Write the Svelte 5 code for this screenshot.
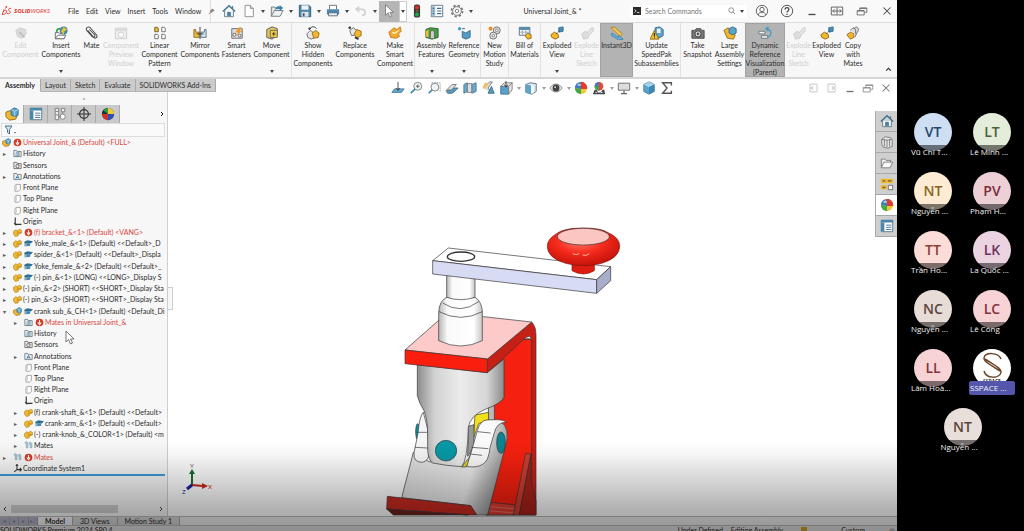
<script>
  const icons = {
    home: `<path d="M3 8v6.5h10V8" fill="#f4f6f8" stroke="#66727c"/><path d="M1 8.5 8 2l7 6.5" fill="none" stroke="#3b7390" stroke-width="1.7"/><path d="M6.500 14V9.500h3V14" fill="#4b8fb5" stroke="#3b6c86"/><path d="M12 2.500v3" stroke="#66727c" stroke-width="1.500"/>`,
    file: `<path d="M3.500 1.500h6l3.500 3.500v9.500H3.500z" fill="#fdfdfd" stroke="#888"/><path d="M9.500 1.500V5H13" fill="#ddd" stroke="#888"/>`,
    open: `<path d="M1.500 14V3.500h4L7 5h5v3" fill="#dfe3e6" stroke="#68727a"/><path d="M1.500 14 5 7.500h10L11.500 14z" fill="#eef1f3" stroke="#68727a"/><path d="M6 7c0-4 3-5 5-4V1l4 3.500L11 8V5.500C9 5 7.500 5.500 6 7z" fill="#3f7fa5"/>`,
    save: `<path d="M1.500 1.500h11l2 2v11h-13z" fill="#4d88ad" stroke="#31546c"/><path d="M4 1.500h8v5H4z" fill="#f0f3f5"/><path d="M4 9h8v5.500H4z" fill="#dde3e8"/><path d="M5.500 10.500h2V14h-2z" fill="#456"/>`,
    print: `<path d="M4 6V1.500h8V6" fill="#fff" stroke="#667"/><path d="M1 6h14v6H1z" fill="#4d88ad"/><path d="M3 10h10v3.500H3z" fill="#e9eef1" stroke="#526774"/>`,
    undo: `<path d="M2 6h7c5 0 5 7 0 7" fill="none" stroke="#d2d2d2" stroke-width="2"/><path d="M6 2 1 6l5 4z" fill="#d2d2d2"/>`,
    pointer: `<path d="M4 1v12l3-3 2 5 2-1-2-4.500h4z" fill="#fff" stroke="#666" stroke-width=".8"/>`,
    traffic: `<rect x="4.500" y="0.500" width="7" height="15" rx="2.500" fill="#3b3b3b"/><circle cx="8" cy="4" r="2.300" fill="#e33023"/><circle cx="8" cy="8" r="1.500" fill="#665f30"/><circle cx="8" cy="12" r="2.300" fill="#23a746"/>`,
    list: `<path d="M1.500 1.500h13v13h-13z" fill="#fff" stroke="#5b6c78"/><path d="M2 2h4v12H2z" fill="#a9c4d5"/><path d="M3 5h2M3 8h2M3 11h2M8 5h5M8 8h5M8 11h5" stroke="#3f6f90" stroke-width="1.300"/>`,
    feature: `<path d="M1.500 1.500h13v13h-13z" fill="#fff" stroke="#4a7591"/><path d="M1 1h14v3H1z" fill="#4a86ab"/><path d="M1 4h4v10H1z" fill="#4a86ab"/><path d="M7 7h6M7 9.500h6M7 12h6" stroke="#3f6f90"/>`,
    gear: `<circle cx="8" cy="8" r="6.300" fill="none" stroke="#777" stroke-width="2" stroke-dasharray="2.600 2.340"/><circle cx="8" cy="8" r="5" fill="#f6f6f6" stroke="#777"/><circle cx="8" cy="8" r="2" fill="#fff" stroke="#777"/>`,
    user: `<circle cx="8" cy="8" r="6.500" fill="none" stroke="#555"/><circle cx="8" cy="6.300" r="2.500" fill="none" stroke="#555"/><path d="M3.500 12.500c1-4 8-4 9 0" fill="none" stroke="#555"/>`,
    help: `<circle cx="8" cy="8" r="6.500" fill="none" stroke="#444"/><path d="M5.800 6.300c0-3 4.400-2.800 4.400-.2C10.200 8 8 7.800 8 9.800M8 11v1.500" fill="none" stroke="#444" stroke-width="1.400"/>`,
    min: `<path d="M4 12h8" stroke="#444" stroke-width="1.500"/>`,
    dock: `<path d="M1.500 3.500h13v9h-13zM8 4v8M3 8h10M5 6 3 8l2 2M11 6l2 2-2 2" fill="none" stroke="#555"/>`,
    restore: `<path d="M2.500 7.500h8v5h-8zM5.500 7V4.500h8v5H11M2.500 8h8M5.500 5h8" fill="none" stroke="#666"/>`,
    close: `<path d="m4 4 8 8M12 4l-8 8" stroke="#444" stroke-width="1.200"/>`,
    paneL: `<path d="M3.500 3.500h8v9h-8z" fill="none" stroke="#aaa"/><path d="M7 6 5 8l2 2" fill="none" stroke="#777"/>`,
    paneR: `<path d="M3.500 3.500h8v9h-8z" fill="none" stroke="#aaa"/><path d="m8 6 2 2-2 2" fill="none" stroke="#777"/>`,
    part: `<path d="M1 6 5 3l3 2 3-3 4 2v5l-4 1-2 4-5 1-3-4z" fill="#f2b62f" stroke="#a67c1e"/><path d="m8 5 1 4 5-1M9 9l-3 2" fill="none" stroke="#a87b17"/>`,
    asm: `<path d="m1 6 5-2 4 5 4 1-2 4-7 1-4-4z" fill="#f2b62f" stroke="#8e6a18"/><path d="m7 3 4-2 4 2v6l-4 2-4-2z" fill="#58a6cf" stroke="#2c6381"/><path d="m7 3 4 2 4-2M11 5v6" fill="none" stroke="#b8dff1"/>`,
    edit: `<path d="m2 5 5-3 6 2 1 5-5 5-5-2z" fill="#dcdcdc" stroke="#cdcdcd"/><path d="m6 7 6 6" stroke="#bbb" stroke-width="2"/>`,
    insert: `<path d="M1.500 14.500v-7h4l1 1h5v6z" fill="#f7f7f7" stroke="#666"/><path d="m1.500 14.500 3-4h9l-2 4z" fill="#fff" stroke="#666"/><circle cx="11" cy="5" r="4.500" fill="#3986b8"/><path d="m11 1 4 3-3 2-1 4-3-4z" fill="#f2c12f"/><path d="M3 7c0-4 3-4 4-4" fill="none" stroke="#3aa14a" stroke-width="2"/>`,
    clip: `<path d="m3 5 7 8c2 2 5 0 3-3L6 2C4 0 0 2 2 5l6 7c2 2 4 0 3-2L5 4" fill="none" stroke="#4d4d4d" stroke-width="1.200"/>`,
    preview: `<path d="M1.500 2.500h13v12h-13z" fill="#eee" stroke="#ccc"/><path d="M2 3h12v3H2z" fill="#ddd"/><circle cx="8" cy="10" r="3" fill="#fff" stroke="#ccc"/>`,
    linear: `<path d="M2 1.500h3l1 1v4H2z" fill="#edbe3f" stroke="#6c5a25"/><g fill="#fff" stroke="#666"><path d="M10 1.500h3l1 1v4h-4zM2 9.500h3l1 1v4H2zM10 9.500h3l1 1v4h-4z"/></g>`,
    mirror: `<path d="M1 4h2v3h4v6H1z" fill="#edbe3f" stroke="#8a6c20"/><path d="M15 4h-2v3H9v6h6z" fill="#cfe1ed" stroke="#547284"/><path d="M8 1v14" stroke="#333"/><path d="M4 9h8" stroke="#333"/>`,
    fastener: `<path d="M2 3h12v11H2z" fill="#ddd" stroke="#666"/><circle cx="5" cy="10" r="1.800" fill="#fff" stroke="#555"/><circle cx="11" cy="11" r="1.500" fill="#fff" stroke="#555"/><path d="m11 1-5 6h3L7 11l7-6h-3l2-3z" fill="#f1952b"/>`,
    move: `<path d="m2 4 6-3 6 2v8l-6 4-6-2z" fill="#e4c55b" stroke="#555"/><path d="M6 5h8v8H6z" fill="#efcb44" stroke="#666"/><path d="M8 9h4M10 7v4" stroke="#333"/>`,
    hidden: `<path d="m1 9 4-4 4 3 1 5-4 2-4-2z" fill="#e6e6e6" stroke="#666"/><path d="m7 8 4-3 4 3-1 5-5 1z" fill="#f2b62f" stroke="#8e6a18"/><path d="M4 4c2-4 6-4 8-1" fill="none" stroke="#333"/><circle cx="4" cy="3" r="1.300" fill="#333"/>`,
    replace: `<path d="m2 5 4-3 4 3-1 5-5 1z" fill="#e9e9e9" stroke="#666"/><path d="m7 9 3-5 5 2v5l-5 3z" fill="#f2b62f" stroke="#8e6a18"/><circle cx="2" cy="2" r="1.500" fill="#333"/><path d="m8 13 4 2" stroke="#333" stroke-width="2"/>`,
    smart: `<path d="m1 7 6-5 3 2 4-3 1 5-3 3 1 3-4 2-6-1z" fill="#f2a92f" stroke="#c07818"/><path d="M5 7c2 3 5 0 7-2" fill="none" stroke="#fff3c8" stroke-width="1.500"/>`,
    features: `<path d="M1 4 6 2l9 1v10l-7 2-7-2z" fill="#46a043" stroke="#2f572e"/><path d="m1 6 3-2v9l-3-1z" fill="#efbd35"/><path d="M6 14V8c0-4 5-4 5 0v6" fill="#ccc" stroke="#555"/>`,
    refgeo: `<path d="m6 6 4 2 5-3v8l-5 2-4-2z" fill="#559bc3" stroke="#386d8d"/><circle cx="3" cy="3" r="2" fill="#4aa0cc"/><path d="M6 3h3" stroke="#444"/>`,
    motion: `<circle cx="10" cy="5" r="4" fill="#ddd" stroke="#666"/><circle cx="10" cy="5" r="1.500" fill="#fff" stroke="#777"/><circle cx="6" cy="11" r="4" fill="#e8e8e8" stroke="#666"/><circle cx="6" cy="11" r="1.500" fill="#fff" stroke="#777"/><circle cx="3" cy="3" r="2.300" fill="#ef8a32"/>`,
    bom: `<path d="M1.500 1.500h12v9h-12z" fill="#fff" stroke="#47657c"/><path d="M1.500 1.500h12v3h-12z" fill="#5489ae"/><path d="M5 4v6M9 4v6M2 7h11" stroke="#8ba4b5"/><path d="m8 11 3-3 4 2v4l-4 1z" fill="#f2b62f" stroke="#8e6a18"/>`,
    exploded: `<path d="m1 10 4-3 4 2 1 4-4 2-4-2z" fill="#f2b62f" stroke="#8e6a18"/><path d="m10 2 5-1v5l-5 1z" fill="#438db8" stroke="#316b8d"/><path d="m7 9 4-4" stroke="#444" stroke-dasharray="1.500 1"/>`,
    line: `<path d="m2 9 4-3 5 3-2 5-5 1z" fill="#ddd" stroke="#ccc"/><path d="m8 8 5-6h2v4l-4 4" fill="#e4e4e4" stroke="#ccc"/>`,
    instant: `<path d="m1 2 4-1 9 8-2 3z" fill="#f1c552" stroke="#a7822d"/><path d="m2 8 8 5V11l5 4-5 1-8-5z" fill="#68b3db" stroke="#3e81a6"/>`,
    update: `<path d="m6 2 5-1 4 3v7l-5 3-5-3z" fill="#5aa5cd" stroke="#34647e"/><path d="M8 3h4v5H8z" fill="#f0f0f0"/><path d="m5 5 5 10H0z" fill="#f5c22c" stroke="#8b6a15"/><path d="M5 8v4M5 13v1" stroke="#222" stroke-width="1.300"/>`,
    camera: `<path d="M1 5h3l2-2h5l1 2h3v9H1z" fill="#777" stroke="#444"/><circle cx="8" cy="9" r="3.500" fill="#ddd" stroke="#333"/><circle cx="8" cy="9" r="1.500" fill="#555"/>`,
    large: `<path d="m1 5 5-3 3 4 5 4-2 5-7-1z" fill="#f2b62f" stroke="#8e6a18"/><path d="m7 3 4-2 4 2v5l-4 2-4-2z" fill="#58a6cf" stroke="#2c6381"/>`,
    dynamic: `<path d="M1 6h7v3H1zM4 11h7v3H4z" fill="#f3f3f3" stroke="#65747d"/><path d="M10 3c6 1 6 8 1 10M12 1 9 3l3 3" fill="none" stroke="#4a9cc7" stroke-width="1.500"/>`,
    copy: `<path d="m1 10 4-3 4 2v4l-4 2z" fill="#f2b62f" stroke="#8e6a18"/><path d="m5 5 3-3 3 2v5M9 3c4-4 7 0 4 4l-3 6" fill="#ddd" stroke="#666"/>`,
    normal: `<path d="m1 13 3-4h11l-3 4z" fill="#69abd0" stroke="#447997"/><path d="M8 1v9M6 8l2 3 2-3" stroke="#444" fill="none"/>`,
    zoomFit: `<circle cx="10" cy="6" r="4.500" fill="#eef4f7" stroke="#777"/><path d="m7 9-5 5" stroke="#3d86b2" stroke-width="2"/><path d="M8 6h4M10 4v4" stroke="#555"/>`,
    zoomArea: `<circle cx="9" cy="7" r="4.500" fill="#eef4f7" stroke="#777"/><path d="m6 10-4 4" stroke="#3d86b2" stroke-width="2"/><path d="M5 2h10v10" fill="none" stroke="#999" stroke-dasharray="2 1"/>`,
    prev: `<path d="m1 11 7-7h5L8 10z" fill="#ddd" stroke="#777"/><path d="M2 13c0-3 3-3 5-2l3-3h5l-4 4-3 2H3z" fill="#5799bf" stroke="#4c7187"/>`,
    section: `<path d="m1 4 4-2v10l-4 2zM10 4l5-2v10l-5 2z" fill="#69abd0" stroke="#4b7891"/><path d="M5 3h5v10H5z" fill="#ddd" stroke="#777"/>`,
    dynview: `<path d="m2 8 8-7h3L8 8l5 6" fill="#ddd" stroke="#777"/><path d="m2 7 3-6 3 3-4 5z" fill="#f3bd57"/><path d="M8 14l4-8 3 8z" fill="#5799bf" stroke="#436e87"/>`,
    orient: `<path d="M2 6h9v9H2z" fill="#58a1cb" stroke="#42748e"/><path d="m2 6 4-4h9l-4 4z" fill="#f2f2f2" stroke="#777"/><path d="m11 6 4-4v8l-4 5z" fill="#e4e4e4" stroke="#777"/><path d="M8 0v6M6 4l2 3 2-3" fill="none" stroke="#333"/>`,
    style: `<path d="m2 4 5-2 7 1v9l-5 3-7-2z" fill="#d9e6ed" stroke="#58707e"/><path d="m2 4 6 1v10l-6-2z" fill="#5ba4cc"/><path d="M8 5h3v9H8z" fill="#fff"/>`,
    eye: `<path d="M1 8c4-6 10-6 14 0-4 6-10 6-14 0z" fill="#f3f3f3" stroke="#777"/><circle cx="8" cy="8" r="4" fill="#444"/><circle cx="7" cy="7" r="1" fill="#ddd"/>`,
    ball: `<circle cx="8" cy="8" r="7" fill="#f1c735"/><path d="M8 1a7 7 0 0 0-7 7l7 1z" fill="#3d7fc5"/><path d="M8 1a7 7 0 0 1 7 8L8 9z" fill="#e33b2e"/><path d="M1 8a7 7 0 0 0 7 7V9z" fill="#3aaa4d"/><ellipse cx="6" cy="4.500" rx="2" ry="1.300" fill="#fff" opacity=".6"/>`,
    darkball: `<circle cx="8" cy="8" r="7" fill="#273e9b"/><path d="M8 1a7 7 0 0 1 7 7L8 8z" fill="#f2ca32"/><path d="M15 8a7 7 0 0 1-7 7V8z" fill="#2c50b8"/><path d="M8 1a7 7 0 0 0-7 7l7 1z" fill="#26332e"/><path d="M1 8a7 7 0 0 0 7 7V8z" fill="#c9362a"/><path d="M3 4c2-3 5-3 5-3v7z" fill="#2f9a45"/>`,
    scene: `<circle cx="8" cy="6" r="5" fill="#e6483b"/><path d="M8 1a5 5 0 0 0-5 5l5 1z" fill="#3d7fc5"/><path d="M3 6a5 5 0 0 0 5 5V6z" fill="#3aaa4d"/><path d="M1 15 3 10h2l2 3h3l2-3h2l1 5z" fill="#444"/><path d="M4 13h2M10 13h2" stroke="#fff"/>`,
    monitor: `<path d="M1.500 2.500h13v8h-13z" fill="#ddd" stroke="#666"/><path d="M8 11v3M4.500 14.500h7" stroke="#666" stroke-width="1.500"/>`,
    cube: `<path d="m2 4 6-3 6 3v8l-6 3-6-3z" fill="#57a3ce" stroke="#4580a0"/><path d="m2 4 6-3 6 3-6 3z" fill="#a7d3ea"/><path d="M8 7v8l6-3V4z" fill="#3d86b2"/>`,
    sigma: `<path d="M13 5V2H3l5 6-5 6h10v-3" fill="none" stroke="#555" stroke-width="1.600"/>`,
    library: `<path d="m2 5 4-3 6 1 2 3v7l-5 2-5-1-2-3z" fill="#e4e4e4" stroke="#777"/><path d="M5 5v8M8 6v8M11 5v8M2 5l6 1 6-1" fill="none" stroke="#777"/>`,
    folder: `<path d="M1.500 13.500v-10h4L7 5h5v2" fill="#eee" stroke="#777"/><path d="m1.500 13.500 3-6.500h10l-3 6.500z" fill="#fafafa" stroke="#777"/>`,
    palette: `<path d="M1 2h14v5H1zM1 9h7v5H1z" fill="#edb933"/><path d="M3 4.500h3M9 4.500h4M3 12h3" stroke="#6d5a2a" stroke-width="1.500"/><path d="M9.500 9.500h5v5h-5z" fill="#fff" stroke="#666"/>`,
    tree: `<path d="M2.500 1.500h4v13h-4zM9.500 1.500h4v4h-4z" fill="#eee" stroke="#777"/><circle cx="11" cy="11" r="3" fill="#fff" stroke="#777"/><path d="M3 5h3M3 9h3M7 11h2M11 6v2" stroke="#777"/>`,
    target: `<circle cx="8" cy="8" r="5" fill="none" stroke="#333" stroke-width="1.400"/><path d="M8 0v16M0 8h16" stroke="#333" stroke-width="1.200"/>`,
    error: `<circle cx="8" cy="8" r="6.800" fill="#d83420"/><path d="M8 3.500v6M5 8l3 4 3-4" fill="none" stroke="#fff" stroke-width="2"/>`,
    cap: `<path d="m1 5 5-3 10 2-4 4-11-1z" fill="#2e6f96"/><path d="M4 7v6l7-1V8" fill="#3c87ad"/><path d="M2 5v8" stroke="#274e65" stroke-width="1.400"/>`,
    history: `<path d="M1.500 13.500v-11h5l1 2h7v9z" fill="#eee" stroke="#697a84" stroke-width="1.500"/><path d="M6 6h5v6H5zM7 8h3M7 10h3" fill="none" stroke="#3b7795"/>`,
    sensors: `<path d="M1.500 13.500v-11h5l1 2h7v9z" fill="#eee" stroke="#666" stroke-width="1.500"/><circle cx="8" cy="9" r="3" fill="#fff" stroke="#444" stroke-width="1.400"/><path d="m8 9 2-2" stroke="#b33"/>`,
    notes: `<path d="M1.500 13.500v-11h5l1 2h7v9z" fill="#eee" stroke="#697a84" stroke-width="1.500"/><path d="m5 12 3-6 3 6M6 10h4" fill="none" stroke="#3577a0" stroke-width="1.500"/>`,
    plane: `<path d="M3.500 4.500 6 2.500h7v9l-3 3H3.500z" fill="#fff" stroke="#888" stroke-width="1.300"/><path d="M6 3v9" stroke="#aaa"/>`,
    origin: `<path d="M4 1v12h11M2 11l4 4" fill="none" stroke="#333" stroke-width="2"/>`,
    mates: `<path d="M2 3c0-3 5-2 5 1v8H4V7zM9 4c0-3 5-2 5 1v7h-3V8z" fill="#a9c9da" stroke="#7c9cae"/>`,
    coord: `<path d="M7 1v9h8M7 10l-5 4M12 7l3 3-3 3M5 3l2-2 2 2" fill="none" stroke="#333" stroke-width="1.800"/>`
  };

  const menus = ["File", "Edit", "View", "Insert", "Tools", "Window"];

  const ribbon = [
    { icon: "edit", lines: ["Edit", "Component"], width: 41, off: true },
    { icon: "insert", lines: ["Insert", "Components"], width: 40, more: true },
    { icon: "clip", lines: ["Mate"], width: 21 },
    { icon: "preview", lines: ["Component", "Preview", "Window"], width: 38, off: true },
    { icon: "linear", lines: ["Linear", "Component", "Pattern"], width: 39, more: true },
    { icon: "mirror", lines: ["Mirror", "Components"], width: 42 },
    { icon: "fastener", lines: ["Smart", "Fasteners"], width: 31 },
    { icon: "move", lines: ["Move", "Component"], width: 40, more: true, sep: true },
    { icon: "hidden", lines: ["Show", "Hidden", "Components"], width: 42 },
    { icon: "replace", lines: ["Replace", "Components"], width: 42 },
    { icon: "smart", lines: ["Make", "Smart", "Component"], width: 39, sep: true },
    { icon: "features", lines: ["Assembly", "Features"], width: 33, more: true },
    { icon: "refgeo", lines: ["Reference", "Geometry"], width: 33, more: true, sep: true },
    { icon: "motion", lines: ["New", "Motion", "Study"], width: 28, sep: true },
    { icon: "bom", lines: ["Bill of", "Materials"], width: 32, sep: true },
    { icon: "exploded", lines: ["Exploded", "View"], width: 32, more: true },
    { icon: "line", lines: ["Explode", "Line", "Sketch"], width: 27, off: true },
    { icon: "instant", lines: ["Instant3D"], width: 33, active: true },
    { icon: "update", lines: ["Update", "SpeedPak", "Subassemblies"], width: 48, sep: true },
    { icon: "camera", lines: ["Take", "Snapshot"], width: 33 },
    { icon: "large", lines: ["Large", "Assembly", "Settings"], width: 31 },
    { icon: "dynamic", lines: ["Dynamic", "Reference", "Visualization", "(Parent)"], width: 40, active: true },
    { icon: "line", lines: ["Explode", "Line", "Sketch"], width: 27, off: true },
    { icon: "exploded", lines: ["Exploded", "View"], width: 29 },
    { icon: "copy", lines: ["Copy", "with", "Mates"], width: 24 }
  ];

  const tabs = ["Assembly", "Layout", "Sketch", "Evaluate", "SOLIDWORKS Add-Ins"];
  const panelTabs = ["asm", "feature", "tree", "target", "darkball"];

  // level 0 is the root row, which has no expander column
  const tree = [
    { level: 0, icons: ["asm", "error"], text: "Universal Joint_& (Default) <FULL>", error: true },
    { level: 1, icons: ["history"], text: "History", open: "▸" },
    { level: 1, icons: ["sensors"], text: "Sensors" },
    { level: 1, icons: ["notes"], text: "Annotations", open: "▸" },
    { level: 1, icons: ["plane"], text: "Front Plane" },
    { level: 1, icons: ["plane"], text: "Top Plane" },
    { level: 1, icons: ["plane"], text: "Right Plane" },
    { level: 1, icons: ["origin"], text: "Origin" },
    { level: 1, icons: ["part", "error"], text: "(f) bracket_&<1> (Default) <VANG>", open: "▸", error: true },
    { level: 1, icons: ["part", "cap"], text: "Yoke_male_&<1> (Default) <<Default>_D", open: "▸" },
    { level: 1, icons: ["part", "cap"], text: "spider_&<1> (Default) <<Default>_Displa", open: "▸" },
    { level: 1, icons: ["part", "cap"], text: "Yoke_female_&<2> (Default) <<Default>_", open: "▸" },
    { level: 1, icons: ["part", "cap"], text: "(-) pin_&<1> (LONG) <<LONG>_Display S", open: "▸" },
    { level: 1, icons: ["part"], text: "(-) pin_&<2> (SHORT) <<SHORT>_Display Sta", open: "▸" },
    { level: 1, icons: ["part"], text: "(-) pin_&<3> (SHORT) <<SHORT>_Display Sta", open: "▸" },
    { level: 1, icons: ["asm", "cap"], text: "crank sub_&_CH<1> (Default) <Default_Di", open: "▾" },
    { level: 2, icons: ["history", "error"], text: "Mates in Universal Joint_&", open: "▸", error: true },
    { level: 2, icons: ["history"], text: "History" },
    { level: 2, icons: ["sensors"], text: "Sensors" },
    { level: 2, icons: ["notes"], text: "Annotations", open: "▸" },
    { level: 2, icons: ["plane"], text: "Front Plane" },
    { level: 2, icons: ["plane"], text: "Top Plane" },
    { level: 2, icons: ["plane"], text: "Right Plane" },
    { level: 2, icons: ["origin"], text: "Origin" },
    { level: 2, icons: ["part"], text: "(f) crank-shaft_&<1> (Default) <<Default>", open: "▸" },
    { level: 2, icons: ["part", "cap"], text: "crank-arm_&<1> (Default) <<Default>", open: "▸" },
    { level: 2, icons: ["part"], text: "(-) crank-knob_&_COLOR<1> (Default) <m", open: "▸" },
    { level: 2, icons: ["mates"], text: "Mates", open: "▸" },
    { level: 1, icons: ["mates", "error"], text: "Mates", open: "▸", error: true },
    { level: 1, icons: ["coord"], text: "Coordinate System1" }
  ];

  const viewTools = [
    { icon: "normal" },
    { icon: "zoomFit" },
    { icon: "zoomArea" },
    { icon: "prev" },
    { icon: "section" },
    { icon: "dynview" },
    { icon: "orient", more: true },
    { icon: "style", more: true },
    { icon: "eye", more: true },
    { icon: "ball" },
    { icon: "scene", more: true },
    { icon: "monitor", more: true },
    { icon: "cube" },
    { icon: "sigma" }
  ];

  const taskPane = ["home", "library", "folder", "palette", "ball", "feature"];

  const people = [
    { initials: "VT", name: "Vũ Chí T...", bg: "#cfdff3", fg: "#28456f" },
    { initials: "LT", name: "Lê Minh ...", bg: "#e4ecda", fg: "#4b6136" },
    { initials: "NT", name: "Nguyễn ...", bg: "#fdebd3", fg: "#8a6324" },
    { initials: "PV", name: "Phạm H...", bg: "#ecd0d5", fg: "#7a2c3c" },
    { initials: "TT", name: "Trần Ho...", bg: "#fbdcd7", fg: "#8c3f35" },
    { initials: "LK", name: "La Quốc ...", bg: "#ecd3e2", fg: "#6f3160" },
    { initials: "NC", name: "Nguyễn ...", bg: "#e8dcd7", fg: "#5c463d" },
    { initials: "LC", name: "Lê Công", bg: "#f7d3d6", fg: "#85323d" },
    { initials: "LL", name: "Lâm Hoà...", bg: "#f7d3d6", fg: "#85323d" },
    { logo: true, name: "SSPACE ...", bg: "#ffffff", fg: "#6b4528", speaking: true },
    { initials: "NT", name: "Nguyễn ...", bg: "#e8dfda", fg: "#5c463d" }
  ];

  let activeTab = $state("Assembly");
  let search = $state("");
</script>

{#snippet icon(name)}
  <svg class="icon" viewBox="0 0 16 16" aria-hidden="true">{@html icons[name]}</svg>
{/snippet}

{#snippet caret()}
  <svg class="caret" viewBox="0 0 4 3" aria-hidden="true"><path d="M0 0h4L2 3z" fill="#444" /></svg>
{/snippet}

<div class="screen">
  <div class="app">
    <header class="titlebar">
      <div class="brand">
        <svg viewBox="0 0 12 12" aria-hidden="true">
          <path d="M4 1h2L4 3M1 5h3c3 0 1 5-2 5H0l2-4M11 3C8 2 7 5 9 6s1 4-3 3" fill="none" stroke="#e0342b" stroke-width="1.200" />
        </svg>
        <span><b>SOLID</b>WORKS</span>
      </div>
      <nav class="menus">
        {#each menus as menu}
          <button>{menu}</button>
        {/each}
        <button class="pin" aria-label="Pin menu">
          <svg viewBox="0 0 8 8"><path d="m5 1 2 2-2 .5L4 5 2.500 3.500 4 2.500zM3 4.500 1 7" fill="#888" stroke="#666" stroke-width=".8" /></svg>
        </button>
      </nav>
      <div class="quick">
        <button class="tool" aria-label="Home">{@render icon("home")}</button>
        {#each ["file", "open", "save", "print", "undo"] as name}
          <button class="tool" aria-label={name}>{@render icon(name)}</button>
          <button class="drop" aria-label="{name} options">{@render caret()}</button>
        {/each}
        <button class="tool select" aria-label="Select">{@render icon("pointer")}</button>
        <button class="drop boxed" aria-label="Select options">{@render caret()}</button>
        <button class="tool" aria-label="Rebuild">{@render icon("traffic")}</button>
        <button class="tool" aria-label="File properties">{@render icon("list")}</button>
        <button class="tool" aria-label="Options">{@render icon("gear")}</button>
        <button class="drop" aria-label="More options">{@render caret()}</button>
      </div>
      <span class="doc">Universal Joint_& *</span>
      <label class="search">
        <svg viewBox="0 0 10 10" aria-hidden="true"><path d="M0 0h10v10H0z" fill="#2b2b2b" /><path d="m2 3 2 2-2 2M5 7h3" fill="none" stroke="#fff" /></svg>
        <input type="text" placeholder="Search Commands" aria-label="Search Commands" bind:value={search} />
        <svg viewBox="0 0 10 10" aria-hidden="true"><circle cx="4" cy="4" r="3" fill="none" stroke="#777" /><path d="m6 6 3 3" stroke="#777" /></svg>
        {@render caret()}
      </label>
      <div class="window-tools">
        {#each ["user", "help", "min", "dock", "restore", "close"] as name}
          <button aria-label={name}>{@render icon(name)}</button>
        {/each}
      </div>
    </header>

    <div class="ribbon">
      {#each ribbon as item}
        <button
          class="command"
          class:active={item.active}
          class:sep={item.sep}
          disabled={item.off}
          style="width: {item.width}px"
        >
          {@render icon(item.icon)}
          {#each item.lines as line}
            <span>{line}</span>
          {/each}
          {#if item.more}
            <i>{@render caret()}</i>
          {/if}
        </button>
      {/each}
      <button class="collapse" aria-label="Collapse ribbon">
        <svg viewBox="0 0 6 4"><path d="m1 3 2-2 2 2" fill="none" stroke="#333" /></svg>
      </button>
    </div>

    <main>
      <aside>
        <div class="tabs">
          {#each tabs as tab}
            <button class:current={activeTab === tab} onclick={() => (activeTab = tab)}>{tab}</button>
          {/each}
        </div>
        <section class="panel">
          <div class="grip"></div>
          <div class="panel-tabs">
            {#each panelTabs as name, i}
              <button class:current={i === 0} aria-label={name}>{@render icon(name)}</button>
            {/each}
            <button class="next" aria-label="More tabs">
              <svg viewBox="0 0 4 6"><path d="m1 1 2 2-2 2" fill="none" stroke="#222" /></svg>
            </button>
          </div>
          <button class="filter" aria-label="Filter">
            <svg viewBox="0 0 12 10"><path d="M1 1h7L5.500 4.500V9l-2-1.500v-3z" fill="#d7e8f1" stroke="#4d7388" /><path d="M10 7h2l-1 1.500z" fill="#444" /></svg>
          </button>
          <ul class="tree">
            {#each tree as node}
              <li class="level{node.level}" class:error={node.error}>
                {#if node.level > 0}
                  <span class="expander">{node.open ?? ""}</span>
                {/if}
                {#each node.icons as name}
                  {@render icon(name)}
                {/each}
                <span>{node.text}</span>
              </li>
            {/each}
          </ul>
          <div class="rollback"></div>
          <div class="hscroll">
            <svg viewBox="0 0 4 6"><path d="M3 1 1 3l2 2" fill="none" stroke="#444" /></svg>
            <div class="track"><div class="thumb"></div></div>
            <svg viewBox="0 0 4 6"><path d="m1 1 2 2-2 2" fill="none" stroke="#444" /></svg>
          </div>
          <div class="splitter"></div>
          <svg class="mouse" viewBox="0 0 10 15" aria-hidden="true">
            <path d="M1 1v11l2.500-2.500L5.500 14l2-1-2-4H9z" fill="#fff" stroke="#555" stroke-width=".8" />
          </svg>
        </section>
      </aside>

      <section class="viewport">
        <div class="view-tools">
          {#each viewTools as tool}
            <button aria-label={tool.icon}>{@render icon(tool.icon)}</button>
            {#if tool.more}
              <button class="view-drop" aria-label="{tool.icon} options">{@render caret()}</button>
            {/if}
          {/each}
        </div>
        <div class="doc-tools">
          {#each ["paneL", "paneR", "min", "restore", "close"] as name}
            <button aria-label={name}>{@render icon(name)}</button>
          {/each}
        </div>

        <svg class="model" viewBox="0 0 915 891" role="img" aria-label="Universal joint assembly">
          <defs>
            <linearGradient id="steel" x1="0" x2="1">
              <stop offset="0" stop-color="#8d8d8d" />
              <stop offset=".2" stop-color="#d2d2d2" />
              <stop offset=".5" stop-color="#ececec" />
              <stop offset=".8" stop-color="#d6d6d6" />
              <stop offset="1" stop-color="#8b8b8b" />
            </linearGradient>
            <linearGradient id="lower" x1="0" y1="0" x2="1" y2=".25">
              <stop offset="0" stop-color="#8f8f8f" />
              <stop offset=".2" stop-color="#dedede" />
              <stop offset=".75" stop-color="#eeeeee" />
              <stop offset="1" stop-color="#9c9c9c" />
            </linearGradient>
            <linearGradient id="shaft" x1="0" x2="1">
              <stop offset="0" stop-color="#b5b5b5" />
              <stop offset=".2" stop-color="#fafafa" />
              <stop offset=".8" stop-color="#ffffff" />
              <stop offset="1" stop-color="#c5c5c5" />
            </linearGradient>
            <radialGradient id="knob" cx=".45" cy=".35" r=".65">
              <stop offset="0" stop-color="#ff7a6c" />
              <stop offset=".5" stop-color="#f52a1c" />
              <stop offset="1" stop-color="#c5130a" />
            </radialGradient>
          </defs>
          <g stroke="#333" stroke-width="2" stroke-linejoin="round">
            <!-- bracket -->
            <path d="M330 440 430 360h28v528H318z" fill="#f5200f" />
            <path d="M455 309q14 14 13 45v534h-13V362l-6-10q-8 0-18 9L322 461v-41z" fill="#c52016" />
            <path d="M432 362q12-7 23 1" fill="none" />
            <path d="M332 850l78 8-8 30h-84z" fill="#dc3b31" />
            <path d="M330 863l78 7M325 875l78 7" stroke="#e98a84" fill="none" />
            <path d="m437 703 16 2-35 183h-18z" fill="#cd3d33" />
            <path d="M453 705v80l15 60v43h-50z" fill="#a92219" />
            <!-- lower yoke -->
            <path d="M100 700 65 836l207 24 18 28h33l58-225q6-56-38-60l-24 2-64 135-108-12z" fill="url(#lower)" />
            <ellipse cx="113" cy="638" rx="6" ry="24" fill="#0c8e9b" />
            <path d="M130 580q-12 12-16 62l-12 60q-3 28 25 28 18-4 20-25l-4-75z" fill="#f5f5f5" />
            <path d="M113 640h28M105 685l38 2" />
            <path d="M325 560h18v50h-18z" fill="#bcbcbc" />
            <path d="m285 588 41-8v22l-30 12-16 46z" fill="#f3e01c" />
            <path d="m262 722 10 5-15 17h-12z" fill="#e8d51f" />
            <path d="m265 622 17-5v65l-19 30z" fill="#999" />
            <path d="M320 603q-20 2-28 32l-20 70-12 38q48 6 62-22 6-15 8-35l12-42q8-36 38-34-10-9-30-8z" fill="#fafafa" />
            <path d="m292 638 40 4M275 685l50 4M270 705l36 4" fill="none" />
            <!-- upper yoke -->
            <path d="M112 437v93q5 22 20 45 10 26 11 65v55q3 30 15 37l42 7 45 4q18-20 20-118 5-34 50-54 50-18 57-36V420l-50 41z" fill="url(#steel)" />
            <ellipse cx="198" cy="695" rx="32" ry="31" fill="#0799a6" />
            <ellipse cx="363" cy="671" rx="13" ry="32" fill="#0c8390" />
            <!-- top plate -->
            <path d="m75 393 125-110 110 10 145 16-133 111z" fill="#fccac8" />
            <path d="m75 393 247 27v41L75 434z" fill="#fa1e0f" />
            <path d="M22 832l250 28 18 28h-25L20 870z" fill="#c82a20" />
            <path d="M20 870l245 18H40z" fill="#702019" />
            <!-- crank shaft -->
            <path d="M200 235q-22 10-24 45v85q66 32 131 0v-90q-4-30-22-40z" fill="url(#shaft)" />
            <path d="M200 160v75q42 14 85 0v-75z" fill="url(#shaft)" />
            <path d="M188 252q54 36 108-4M177 278q65 34 130 0" fill="none" />
            <!-- crank arm -->
            <path d="m158 125 47-38 487 56-42 39z" fill="#fff" />
            <path d="m158 125 492 57v41L158 165z" fill="#d8dbf4" />
            <path d="m650 182 42-39v42l-42 38z" fill="#a8adc9" />
            <ellipse cx="243" cy="113" rx="41" ry="14" fill="#fff" stroke-width="4" />
            <!-- knob -->
            <path d="M576 125v30q34 20 67 0v-30z" fill="#dc1c10" stroke="#8a120b" />
            <path d="M610 27q-60 0-80 17-28 15-28 38 0 35 55 51 53 14 108 0 54-16 54-52 0-26-35-40-20-14-74-14z" fill="url(#knob)" stroke="#7a150e" />
            <ellipse cx="610" cy="53" rx="78" ry="25" fill="#fbc5c2" />
            <path d="M578 104q10 6 20 0M608 108q10 4 20-4" fill="none" stroke="#ffb0a8" stroke-width="3" />
          </g>
        </svg>

        <svg class="triad" viewBox="0 0 32 32" aria-hidden="true">
          <path d="M10 21V9" stroke="#16702c" stroke-width="2" />
          <path d="m7 10 3-5 3 5z" fill="#16702c" />
          <path d="m10 21 11 1" stroke="#c92a22" stroke-width="2" />
          <path d="m20 19 6 3-6 3z" fill="#c92a22" />
          <path d="m10 21-5 4" stroke="#1f1fa0" stroke-width="3" />
          <text x="8" y="4" fill="#555">Y</text>
          <text x="26" y="25" fill="#c92a22">X</text>
          <text x="0" y="30" fill="#1f1fa0">Z</text>
        </svg>

        <div class="task-pane">
          {#each taskPane as name}
            <button class:current={name === "ball"} aria-label={name}>{@render icon(name)}</button>
          {/each}
        </div>
      </section>
    </main>

    <div class="sheets">
      <div class="sheet-nav">
        {#each ["|◂", "◂", "▸", "▸|"] as arrow}
          <button>{arrow}</button>
        {/each}
      </div>
      <button class="current">Model</button>
      <button>3D Views</button>
      <button>Motion Study 1</button>
    </div>
    <footer>
      <span class="version">SOLIDWORKS Premium 2024 SP0.4</span>
      <span>Under Defined</span>
      <span>Editing Assembly</span>
      <span class="flag"></span>
      <span class="units">Custom</span>
      <span>◎</span>
    </footer>
    <div class="shade"></div>
  </div>

  <div class="people">
    {#each people as person}
      <div class="person" class:speaking={person.speaking}>
        <div class="avatar" style="background: {person.bg}; color: {person.fg}">
          {#if person.logo}
            <svg viewBox="0 0 38 38" aria-hidden="true">
              <path d="M28 10C25 3 12 3 11 9c0 3 2 4 5 6l11 7M11 22c2 8 16 8 17 1 0-3-2-4-5-6L12 10" fill="none" stroke="#6b4528" stroke-width="1.500" />
              <text x="19" y="34" text-anchor="middle">SSPACE</text>
            </svg>
          {:else}
            {person.initials}
          {/if}
        </div>
        <div class="name">{person.name}</div>
      </div>
    {/each}
  </div>
</div>

<style>
  :global(body) {
    margin: 0;
    background: #000;
  }

  .screen {
    display: flex;
    min-height: 100vh;
    font-family: Lato, "Open Sans", sans-serif;
    font-size: 7px;
    line-height: 9px;
    color: #2b2b2b;
  }

  button {
    margin: 0;
    padding: 0;
    border: 0;
    background: none;
    font: inherit;
    color: inherit;
    white-space: nowrap;
  }

  svg {
    display: block;
    flex: none;
  }

  .icon {
    width: 14px;
    height: 14px;
  }

  .caret {
    width: 4px;
    height: 3px;
  }

  .app {
    position: relative;
    flex: 1;
    min-width: 0;
    display: flex;
    flex-direction: column;
    background: #f7f7f7;
    overflow: hidden;
  }

  .titlebar {
    display: flex;
    align-items: center;
    height: 22px;
    background: #f9f9f9;
    border-bottom: 1px solid #dcdcdc;
  }

  .brand {
    display: flex;
    align-items: center;
    gap: 2px;
    width: 68px;
    padding-left: 2px;
    box-sizing: border-box;
    color: #e0342b;
    font-size: 6px;
    font-family: "Open Sans", sans-serif;
    font-style: italic;
  }

  .brand svg {
    width: 10px;
    height: 10px;
  }

  .menus {
    display: flex;
    align-items: center;
    gap: 7px;
    width: 142px;
    height: 22px;
    border-right: 1px solid #ddd;
  }

  .pin svg {
    width: 7px;
    height: 7px;
  }

  .quick {
    display: flex;
    align-items: center;
    padding-left: 8px;
    height: 22px;
  }

  .tool {
    display: grid;
    place-items: center;
    width: 20px;
    height: 21px;
  }

  .drop {
    display: grid;
    place-items: center;
    width: 8px;
    height: 21px;
  }

  .select {
    background: #b5b5b5;
  }

  .boxed {
    border: 1px solid #ccc;
    background: #fff;
  }

  .doc {
    flex: 1;
    text-align: center;
    white-space: nowrap;
  }

  .search {
    display: flex;
    align-items: center;
    gap: 4px;
    width: 117px;
    height: 13px;
    padding: 0 3px;
    box-sizing: border-box;
    background: #fff;
  }

  .search svg:not(.caret) {
    width: 8px;
    height: 8px;
  }

  .search input {
    flex: 1;
    min-width: 0;
    padding: 0;
    border: 0;
    outline: 0;
    background: none;
    font: inherit;
  }

  .window-tools {
    display: flex;
    gap: 5px;
    padding-left: 5px;
  }

  .window-tools button {
    display: grid;
    place-items: center;
    width: 20px;
  }

  .ribbon {
    display: flex;
    height: 54px;
    background: #f7f7f7;
    border-bottom: 2px solid #d5d5d5;
  }

  .command {
    position: relative;
    flex: none;
    display: flex;
    flex-direction: column;
    align-items: center;
    padding-top: 3px;
    box-sizing: border-box;
  }

  .command .icon {
    margin-bottom: 1px;
  }

  .command i {
    position: absolute;
    bottom: 4px;
  }

  .command:disabled {
    color: #cfcfcf;
  }

  .command.sep {
    border-right: 1px solid #e2e2e2;
  }

  .command.active {
    background: #b3b3b3;
    box-shadow: inset 0 0 0 1px #a2a2a2;
  }

  .collapse {
    margin-left: auto;
    padding: 0 5px 5px 0;
    align-self: flex-end;
  }

  .collapse svg {
    width: 7px;
    height: 5px;
  }

  main {
    flex: 1;
    display: flex;
    min-height: 0;
    background: #fff;
  }

  aside {
    z-index: 1;
    width: 168px;
    display: flex;
    flex-direction: column;
  }

  .tabs {
    display: flex;
    height: 13px;
  }

  .tabs button {
    padding: 0 4px;
    background: #cbcbcb;
    border-right: 1px solid #a9a9a9;
    border-bottom: 1px solid #b5b5b5;
  }

  .tabs button.current {
    padding: 0 5px;
    background: #f7f7f7;
    border-bottom-color: #f7f7f7;
    font-weight: bold;
  }

  .panel {
    position: relative;
    flex: 1;
    display: flex;
    flex-direction: column;
    background: #f7f7f7;
    border-right: 1px solid #cfcfcf;
  }

  .grip {
    display: grid;
    place-items: center;
    height: 13px;
  }

  .grip::before {
    content: "";
    width: 2px;
    height: 2px;
    border-radius: 50%;
    background: #aaa;
  }

  .panel-tabs {
    display: flex;
    height: 18px;
  }

  .panel-tabs button {
    display: grid;
    place-items: center;
    width: 24px;
    background: #c9c9c9;
    border-right: 1px solid #aaa;
  }

  .panel-tabs button.current {
    background: #f7f7f7;
  }

  .panel-tabs .next {
    width: 10px;
    margin-left: auto;
    background: none;
    border: 0;
  }

  .next svg,
  .hscroll svg {
    width: 4px;
    height: 6px;
  }

  .filter {
    height: 14px;
    margin: 0 2px 0 1px;
    padding-left: 2px;
    border: 1px solid #ddd;
    background: #fafafa;
  }

  .filter svg {
    width: 12px;
    height: 10px;
  }

  .tree {
    flex: 1;
    display: grid;
    grid-auto-rows: 1fr;
    margin: 0;
    padding: 0;
    list-style: none;
  }

  .tree li {
    display: flex;
    align-items: center;
    white-space: nowrap;
  }

  .tree .icon {
    width: 9px;
    height: 9px;
    margin: 0 1px;
  }

  .tree li.level0 {
    padding-left: 1px;
  }

  .tree li.level2 {
    padding-left: 11px;
  }

  .tree li.error {
    color: #d8453d;
  }

  .expander {
    flex: none;
    width: 9px;
    padding-left: 3px;
    font-size: 6px;
    color: #555;
  }

  .rollback {
    height: 2px;
    margin-right: 2px;
    background: #3f9bd8;
  }

  .hscroll {
    display: flex;
    align-items: center;
    gap: 4px;
    padding: 29px 4px 3px 3px;
  }

  .track {
    flex: 1;
    height: 8px;
  }

  .thumb {
    width: 74%;
    height: 8px;
    background: #cfcfcf;
  }

  .splitter {
    position: absolute;
    top: 195px;
    right: -6px;
    width: 4px;
    height: 21px;
    border: 1px solid #ccc;
    background: #f7f7f7;
  }

  .mouse {
    position: absolute;
    left: 65px;
    top: 238px;
    width: 10px;
    height: 15px;
  }

  .viewport {
    position: relative;
    flex: 1;
    min-width: 0;
    display: flex;
    flex-direction: column;
    align-items: center;
    justify-content: space-between;
  }

  .view-tools {
    display: flex;
    height: 18px;
  }

  .view-tools button {
    display: grid;
    place-items: center;
    width: 18px;
  }

  .view-tools .view-drop {
    width: 7px;
    opacity: 0.5;
  }

  .doc-tools {
    position: absolute;
    top: 2px;
    right: 2px;
    display: flex;
    opacity: 0.75;
  }

  .doc-tools button {
    display: grid;
    place-items: center;
    width: 18px;
  }

  .model {
    width: 305px;
    height: 297px;
  }

  .triad {
    position: absolute;
    left: 14px;
    bottom: 20px;
    width: 32px;
    height: 32px;
    overflow: visible;
    font-size: 6px;
  }

  .task-pane {
    position: absolute;
    top: 32px;
    right: 0;
    display: flex;
    flex-direction: column;
    border-left: 1px solid #aaa;
  }

  .task-pane button {
    display: grid;
    place-items: center;
    width: 21px;
    height: 21px;
    background: #cfcfcf;
    border-bottom: 1px solid #a8a8a8;
  }

  .task-pane button.current {
    background: #fff;
  }

  .sheets {
    display: flex;
    height: 10px;
    background: #f0f0f0;
    border-top: 1px solid #bbb;
    border-bottom: 1px solid #bbb;
    box-sizing: border-box;
    line-height: 8px;
  }

  .sheets > button {
    padding: 0 7px;
    background: #d6d6d6;
    border-right: 1px solid #aaa;
  }

  .sheets > button.current {
    background: #f7f7f7;
    font-weight: bold;
  }

  .sheet-nav {
    display: flex;
    width: 38px;
    background: #b4b4c4;
  }

  .sheet-nav button {
    flex: 1;
    border-right: 1px solid #9999ac;
    font-size: 6px;
    color: #8585a0;
  }

  footer {
    display: flex;
    gap: 8px;
    height: 5px;
    padding-right: 2px;
    background: #e6e6e6;
    overflow: hidden;
    white-space: nowrap;
  }

  .version {
    flex: 1;
  }

  .flag {
    width: 6px;
    margin: 1px 26px 0 10px;
    background: #d7a51c;
  }

  .units {
    margin-right: 16px;
  }

  .shade {
    position: absolute;
    z-index: 2;
    left: 0;
    right: 0;
    bottom: 0;
    height: 90px;
    background: linear-gradient(transparent, rgba(0, 0, 0, 0.04) 15%, rgba(0, 0, 0, 0.3) 75%, rgba(0, 0, 0, 0.38));
    pointer-events: none;
  }

  .people {
    width: 127px;
    display: flex;
    flex-wrap: wrap;
    align-content: flex-start;
    justify-content: center;
    gap: 13px;
    padding: 113px 0 0 4px;
    box-sizing: border-box;
    background: #000;
    font-family: "Open Sans", "Noto Sans", sans-serif;
  }

  .person {
    width: 46px;
  }

  .avatar {
    display: grid;
    place-items: center;
    width: 38px;
    height: 38px;
    margin: 0 auto;
    border-radius: 50%;
    overflow: hidden;
    font-size: 14px;
    font-weight: 600;
    line-height: 38px;
  }

  .avatar svg {
    width: 38px;
    height: 38px;
    font-size: 5px;
  }

  .name {
    position: relative;
    height: 14px;
    margin-top: -6px;
    padding-left: 1px;
    background: rgba(0, 0, 0, 0.5);
    color: #f2f2f2;
    font-size: 8px;
    line-height: 14px;
    white-space: nowrap;
  }

  .speaking .name {
    background: #5356ab;
    border-radius: 2px;
  }
</style>
